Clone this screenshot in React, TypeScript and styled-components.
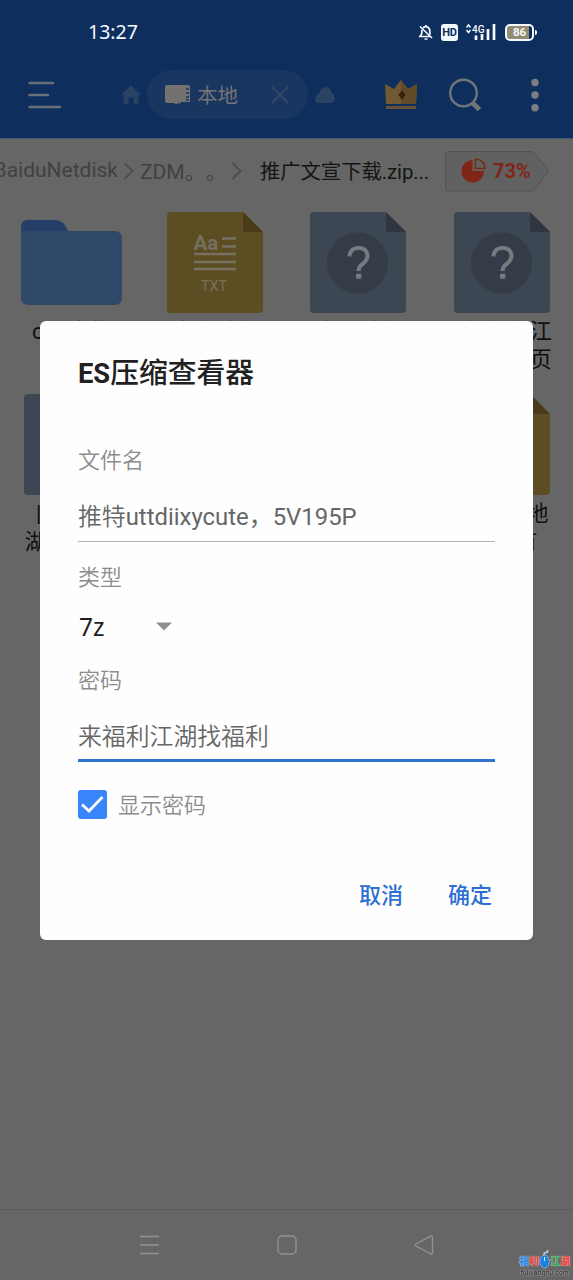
import React from "react";
import styled, { createGlobalStyle, css } from "styled-components";

const sans = `Roboto, "Noto Sans CJK SC", sans-serif`;
const humanist = `"Noto Sans", "Noto Sans CJK SC", sans-serif`;

const GlobalStyle = createGlobalStyle`
  * { box-sizing: border-box; }
  body { margin: 0; background: #666; font-family: ${sans}; text-spacing-trim: space-all; }
  svg { display: block; flex: none; }
`;

const Screen = styled.div`
  position: relative;
  width: 573px;
  height: 1280px;
  overflow: hidden;
  background: #666;
  display: flex;
  flex-direction: column;
`;

const Header = styled.header`
  height: 139px;
  background: #0e2f5e;
  border-bottom: 1px solid #4a5a70;
`;

const StatusBar = styled.div`
  height: 64px;
  padding: 0 36px 0 88px;
  display: flex;
  align-items: center;
  color: #f4f8ff;
`;

const Clock = styled.span`
  flex: 1;
  font: 400 19.5px/24px ${humanist};
`;

const StatusIcons = styled.div`
  display: flex;
  align-items: center;
`;

const HdBadge = styled.span`
  width: 17px;
  height: 17px;
  margin: 0 7px 0 8px;
  border-radius: 3px;
  background: #f4f8ff;
  color: #0e2f5e;
  font: 700 11px/17px ${sans};
  letter-spacing: -0.3px;
  text-align: center;
`;

const Battery = styled.span`
  position: relative;
  width: 29px;
  height: 17px;
  margin: 0 3px 0 9px;
  border: 2px solid #f4f8ff;
  border-radius: 5px;
  background: linear-gradient(90deg, #938c72 86%, #0e2f5e 86%);
  font: 700 11.5px/13px ${sans};
  text-align: center;
  &::after {
    content: "";
    position: absolute;
    right: -5px;
    top: 4px;
    width: 2px;
    height: 5px;
    border-radius: 0 2px 2px 0;
    background: #f4f8ff;
  }
`;

const Toolbar = styled.div`
  height: 61px;
  display: flex;
  align-items: center;
  padding: 0 33px 0 28px;
`;

const TabPill = styled.div`
  width: 161px;
  height: 49px;
  margin: 0 7px 0 6px;
  padding: 0 18px;
  border-radius: 25px;
  background: #183660;
  display: flex;
  align-items: center;
  color: #747474;
  font-size: 20.5px;
  font-weight: 400;
  & > span { flex: 1; margin-left: 7px; padding-bottom: 2px; }
`;

const Gap = styled.span<{ $w: number }>`
  flex: none;
  width: ${(p) => p.$w}px;
`;

const Breadcrumbs = styled.nav`
  height: 64px;
  display: flex;
  align-items: center;
  font-size: 21px;
  white-space: nowrap;
  color: #414141;
`;

const Crumb = styled.span<{ $width: number; $current?: boolean }>`
  flex: none;
  width: ${(p) => p.$width}px;
  padding-bottom: 3px;
  ${(p) => p.$current && css`color: #151515; font-size: 20.4px; letter-spacing: -0.1px;`}
`;

const ClippedCrumb = styled(Crumb)`
  display: flex;
  justify-content: flex-end;
`;

const UsageTag = styled.div`
  position: relative;
  width: 104px;
  height: 41px;
  display: flex;
  align-items: center;
  padding-left: 16px;
  gap: 7px;
  color: #7f2617;
  font-size: 20px;
  font-weight: 700;
  & > span { position: relative; }
`;

const TagShape = styled.svg`
  position: absolute;
  left: 0;
  top: 0;
`;

const UsageIcon = styled.svg`
  position: relative;
`;

const FileGrid = styled.main`
  flex: 1;
  display: grid;
  grid-template-columns: repeat(4, 143.33px);
  grid-auto-rows: 182px;
  padding-top: 8px;
`;

const FileCell = styled.div`
  display: flex;
  flex-direction: column;
  align-items: center;
`;

const FileLabel = styled.div`
  margin-top: 4px;
  font-size: 22px;
  line-height: 28px;
  color: #0f0f0f;
  text-align: center;
  white-space: pre;
`;

const NavBar = styled.footer`
  height: 71px;
  border-top: 1px solid #5c5c5c;
  display: flex;
  align-items: center;
  justify-content: space-between;
  padding: 0 139px;
`;

const Dialog = styled.section`
  position: absolute;
  left: 40px;
  top: 321px;
  width: 493px;
  height: 618.5px;
  padding: 35px 38px 0;
  border-radius: 6px;
  background: #fefefe;
  display: flex;
  flex-direction: column;
`;

const Title = styled.h1`
  height: 36px;
  margin: 0 0 54px;
  font-size: 28.8px;
  line-height: 35px;
  font-weight: 500;
  color: #212121;
  & > b { font-weight: 700; font-size: 27.3px; }
`;

const FieldLabel = styled.label`
  font-size: 22px;
  line-height: 30px;
  font-weight: 350;
  color: #8c8c8c;
`;

const Field = styled.div<{ $focused?: boolean }>`
  height: 66px;
  padding-top: 23px;
  margin-bottom: ${(p) => (p.$focused ? 28 : 21)}px;
  border-bottom: ${(p) => (p.$focused ? "3px solid #2f74d0" : "1px solid #b4b4b4")};
  font-size: 23.85px;
  line-height: 36px;
  font-weight: ${(p) => (p.$focused ? 350 : 400)};
  color: #666;
  white-space: nowrap;
`;

const Latin = styled.span`
  font-size: 23.9px;
`;

const LightCjk = styled.span`
  font-weight: 350;
`;

const Select = styled.div`
  height: 73px;
  padding: 0 0 6px 1px;
  display: flex;
  align-items: center;
  font: 400 24.5px/32px ${humanist};
  color: #1d1d1d;
  & > span { width: 77px; }
`;

const CheckRow = styled.div`
  display: flex;
  align-items: flex-start;
  gap: 11px;
  & > label { padding-top: 1px; }
`;

const CheckBox = styled.span`
  width: 29px;
  height: 29px;
  border-radius: 3px;
  background: #3886fa;
`;

const Actions = styled.div`
  margin-top: 58px;
  display: flex;
  justify-content: flex-end;
  gap: 45px;
  padding-right: 3px;
`;

const Action = styled.button`
  border: 0;
  padding: 0;
  background: none;
  color: #2c70d4;
  font: 500 22px/34px ${sans};
`;

const Watermark = styled.div`
  position: absolute;
  left: 519px;
  top: 1250px;
  width: 51px;
  display: flex;
  flex-direction: column;
  align-items: center;
`;

const MarkRow = styled.div`
  display: flex;
  align-items: center;
  height: 18px;
`;

const MarkChar = styled.span<{ $color: string }>`
  width: 10px;
  font: 900 10px/12px "Noto Sans CJK SC", sans-serif;
  padding-top: 3px;
  color: ${(p) => p.$color};
  text-shadow: 0 0 1px #fff;
`;

const MarkUrl = styled.span`
  font: 700 6.5px/9px "Liberation Sans", sans-serif;
  color: #222;
  white-space: nowrap;
  text-shadow: 0 0 1px #ddd, 0 0 1px #ddd;
`;

const FolderIcon = () => (
  <svg width="103" height="103" viewBox="0 0 103 103">
    <path d="M1 30V15a6 6 0 0 1 6-6h28q9 0 13 11v10z" fill="#253f69" />
    <path d="M1 20h94a7 7 0 0 1 7 7v60a7 7 0 0 1-7 7H8a7 7 0 0 1-7-7z" fill="#2f4868" />
  </svg>
);

const Sheet = ({ color, fold, children }: { color: string; fold: string; children: React.ReactNode }) => (
  <svg width="96" height="103" viewBox="0 0 96 103">
    <path d="M4 1H76L96 21V98a4 4 0 0 1-4 4H4a4 4 0 0 1-4-4V5a4 4 0 0 1 4-4z" fill={color} />
    <path d="M76 1L96 21H76z" fill={fold} />
    {children}
  </svg>
);

const TextFileIcon = () => (
  <Sheet color="#5d4d22" fold="#4a3a18">
    <text x="26.5" y="39" fontFamily="Roboto" fontWeight="700" fontSize="20.5" fill="#75705f">Aa</text>
    <path d="M55 27.5H69M55 35.5H69M27 43H69M27 51H69M27 58H69" stroke="#75705f" strokeWidth="2.4" />
    <text x="34" y="80" fontFamily="Roboto" fontWeight="400" fontSize="15.5" textLength="26" lengthAdjust="spacingAndGlyphs" fill="#75705f">TXT</text>
  </Sheet>
);

const UnknownFileIcon = () => (
  <Sheet color="#3d4653" fold="#2e3641">
    <circle cx="47.5" cy="52" r="30.5" fill="#343c47" />
    <path d="M39.5 45.5c.5-12 18-11.5 18-.5 0 7.5-8.700 8-8.700 13.5v1.5" fill="none" stroke="#777b80" strokeWidth="4" />
    <rect x="46" y="62.8" width="5.4" height="5" rx="1" fill="#777b80" />
  </Sheet>
);

const files = [
  { kind: "folder", label: "cos合集" },
  { kind: "text", label: "1新福利江" },
  { kind: "unknown", label: "1新福利江" },
  { kind: "unknown", label: "1新福利江\n1湖发布页" },
  { kind: "unknown", label: "|福利江\n湖发布页." },
  { kind: "text", label: "永久地址" },
  { kind: "unknown", label: "永久地址" },
  { kind: "text", label: ".永久福地\n.布页有" },
];

const icons: Record<string, React.FC> = {
  folder: FolderIcon,
  text: TextFileIcon,
  unknown: UnknownFileIcon,
};

const Chevron = () => (
  <svg width="12" height="20" viewBox="0 0 12 20">
    <path d="M1.500 2l8 8-8 8" fill="none" stroke="#505050" strokeWidth="2.200" />
  </svg>
);

const StatusArea = () => (
  <StatusBar>
    <Clock>13:27</Clock>
    <StatusIcons>
      <svg width="15" height="17" viewBox="0 0 15 17" fill="none" stroke="#f4f8ff" strokeWidth="1.700">
        <path d="M5 3.800C9 .8 12 4 11.800 7.500l.4 3M3.800 6v3.500L2 12.500H12.500M2 2.500l12 11.500M8 1v1.500M6.500 15h3" />
      </svg>
      <HdBadge>HD</HdBadge>
      <svg width="31" height="18" viewBox="0 0 31 18">
        <path d="M1.500 4.500l2-2.500 2 2.500M1.500 7l2 2.500 2-2.500" fill="none" stroke="#f4f8ff" strokeWidth="1.500" />
        <text x="7" y="9.500" fontFamily="Roboto" fontSize="10" fontWeight="500" fill="#f4f8ff">4G</text>
        <path d="M11 12.500v4.500M17 11v6M23 6v11M29 1v16" stroke="#f4f8ff" strokeWidth="2.700" />
      </svg>
      <Battery>86</Battery>
    </StatusIcons>
  </StatusBar>
);

const HeaderTools = () => (
  <Toolbar>
    <svg width="34" height="30" viewBox="0 0 34 30">
      <path d="M1.500 3H25M1.500 15H20M1.500 27H32" stroke="#6b7078" strokeWidth="2.400" strokeLinecap="round" />
    </svg>
    <Gap $w={59} />
    <svg width="20" height="20" viewBox="0 0 20 20">
      <path d="M10 0L20 10H17.500V19H12.500V12.500H7.500V19H2.500V10H0z" fill="#294262" />
    </svg>
    <TabPill>
      <svg width="25" height="21" viewBox="0 0 25 21">
        <path d="M2 1H23a2 2 0 0 1 2 2v15H16l-1.500 2-1.500-1-2 1.500-2-1.500H2a2 2 0 0 1-2-2V3a2 2 0 0 1 2-2z" fill="#747270" />
        <path d="M21 5h3M21 9h3M21 13h3M21 16h3" stroke="#183660" strokeWidth="1.500" />
      </svg>
      <span>本地</span>
      <svg width="20" height="20" viewBox="0 0 20 20">
        <path d="M2 2l16 16M18 2L2 18" stroke="#3a4b66" strokeWidth="1.600" />
      </svg>
    </TabPill>
    <svg width="20" height="16" viewBox="0 0 20 16">
      <path d="M4 16C-1 16-1 9 3.500 7.500 5 3 8 0 11 0s4.500 2 5.500 6C22 9 20 16 16 16z" fill="#2b4363" />
    </svg>
    <Gap $w={50} />
    <svg width="32" height="30" viewBox="0 0 32 30">
      <path d="M0 4l9 5 7-9 7 9 9-5-1 20H1z" fill="#715934" />
      <path d="M16 0l7 9 9-5-1 20H16z" fill="#614a28" />
      <path d="M17 10l3.500 5L17 20l-3.500-5z" fill="#33240f" />
      <path d="M1 27.500H31" stroke="#6b5433" strokeWidth="3" />
    </svg>
    <Gap $w={32} />
    <svg width="33" height="34" viewBox="0 0 33 34">
      <circle cx="14.500" cy="15" r="13.300" fill="none" stroke="#72757a" strokeWidth="2.400" />
      <path d="M23.500 25l7 6.500" stroke="#72757a" strokeWidth="5" />
    </svg>
    <Gap $w={49} />
    <svg width="8" height="34" viewBox="0 0 8 34" fill="#7b7e83">
      <circle cx="4" cy="4.500" r="3.700" />
      <circle cx="4" cy="17" r="3.700" />
      <circle cx="4" cy="29.800" r="3.700" />
    </svg>
  </Toolbar>
);

export default function App() {
  return (
    <Screen>
      <GlobalStyle />
      <Header>
        <StatusArea />
        <HeaderTools />
      </Header>
      <Breadcrumbs>
        <ClippedCrumb $width={118}>BaiduNetdisk</ClippedCrumb>
        <Gap $w={5} />
        <Chevron />
        <Gap $w={5} />
        <Crumb $width={91}>ZDM。。</Crumb>
        <Chevron />
        <Gap $w={17} />
        <Crumb $width={185} $current>推广文宣下载.zip...</Crumb>
        <UsageTag>
          <TagShape width="104" height="41" viewBox="0 0 104 41">
            <path d="M4 .5H85q3 0 5 2.500L102 18q1.500 2 0 4L90 38q-2 2-5 2H4a3.500 3.500 0 0 1-3.500-3.500V4A3.500 3.500 0 0 1 4 .5z" fill="#616161" stroke="#525252" />
          </TagShape>
          <UsageIcon width="25" height="26" viewBox="0 0 25 26">
            <path d="M11.500 2v11H23A11.300 11.300 0 1 1 11.500 2z" fill="#7f2617" />
            <path d="M14.500 1v9.500H24C24 4.500 19 1 14.500 1z" fill="none" stroke="#7f2617" strokeWidth="1.500" />
          </UsageIcon>
          <span>73%</span>
        </UsageTag>
      </Breadcrumbs>
      <FileGrid>
        {files.map(({ kind, label }, i) => {
          const Icon = icons[kind];
          return (
            <FileCell key={i}>
              <Icon />
              <FileLabel>{label}</FileLabel>
            </FileCell>
          );
        })}
      </FileGrid>
      <NavBar>
        <svg width="21" height="20" viewBox="0 0 21 20">
          <path d="M1 1.500H20M1 10H20M1 18.500H20" stroke="#929292" strokeWidth="1.400" />
        </svg>
        <svg width="20" height="20" viewBox="0 0 20 20">
          <rect x="1" y="1" width="18" height="18" rx="4" fill="none" stroke="#929292" strokeWidth="1.400" />
        </svg>
        <svg width="20" height="20" viewBox="0 0 20 20">
          <path d="M16.500 1.200L2 9q-1.500 1 0 2l14.500 7.800q2 .7 2-1.300V2.500q0-2-2-1.300z" fill="none" stroke="#929292" strokeWidth="1.400" />
        </svg>
      </NavBar>
      <Dialog>
        <Title><b>ES</b>压缩查看器</Title>
        <FieldLabel>文件名</FieldLabel>
        <Field><LightCjk>推特</LightCjk><Latin>uttdiixycute，5V195P</Latin></Field>
        <FieldLabel>类型</FieldLabel>
        <Select>
          <span>7z</span>
          <svg width="16" height="9" viewBox="0 0 16 9"><path d="M0 .5H16L8 8.500z" fill="#8f8f8f" /></svg>
        </Select>
        <FieldLabel>密码</FieldLabel>
        <Field $focused>来福利江湖找福利</Field>
        <CheckRow>
          <CheckBox>
            <svg width="29" height="29" viewBox="0 0 29 29">
              <path d="M4 14.500l7 6.500L24.500 7" fill="none" stroke="#fff" strokeWidth="2.800" />
            </svg>
          </CheckBox>
          <FieldLabel>显示密码</FieldLabel>
        </CheckRow>
        <Actions>
          <Action>取消</Action>
          <Action>确定</Action>
        </Actions>
      </Dialog>
      <Watermark>
        <MarkRow>
          <MarkChar $color="#2f8ae8">福</MarkChar>
          <MarkChar $color="#e8463a">利</MarkChar>
          <svg width="11" height="19" viewBox="0 0 11 19">
            <path d="M5.500 6Q4 3 7 2.500T8 0" fill="none" stroke="#b8d4ee" strokeWidth="1.500" />
            <ellipse cx="5.500" cy="11.500" rx="4.800" ry="6.500" fill="#1f7fe0" stroke="#a9cdf2" strokeWidth=".6" />
            <path d="M5.500 7v4" stroke="#d8ecff" />
          </svg>
          <MarkChar $color="#35a853">江</MarkChar>
          <MarkChar $color="#e8463a">湖</MarkChar>
        </MarkRow>
        <MarkUrl>fulijianghu.com</MarkUrl>
      </Watermark>
    </Screen>
  );
}
